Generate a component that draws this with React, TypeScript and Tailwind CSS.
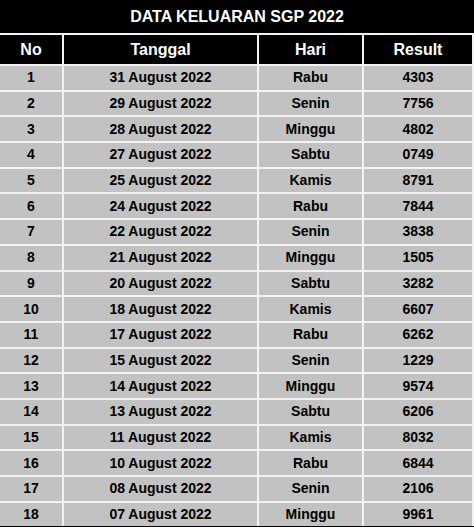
import React from 'react';

type Row = { no: number; tanggal: string; hari: string; result: string };

const rows: Row[] = [
  { no: 1, tanggal: '31 August 2022', hari: 'Rabu', result: '4303' },
  { no: 2, tanggal: '29 August 2022', hari: 'Senin', result: '7756' },
  { no: 3, tanggal: '28 August 2022', hari: 'Minggu', result: '4802' },
  { no: 4, tanggal: '27 August 2022', hari: 'Sabtu', result: '0749' },
  { no: 5, tanggal: '25 August 2022', hari: 'Kamis', result: '8791' },
  { no: 6, tanggal: '24 August 2022', hari: 'Rabu', result: '7844' },
  { no: 7, tanggal: '22 August 2022', hari: 'Senin', result: '3838' },
  { no: 8, tanggal: '21 August 2022', hari: 'Minggu', result: '1505' },
  { no: 9, tanggal: '20 August 2022', hari: 'Sabtu', result: '3282' },
  { no: 10, tanggal: '18 August 2022', hari: 'Kamis', result: '6607' },
  { no: 11, tanggal: '17 August 2022', hari: 'Rabu', result: '6262' },
  { no: 12, tanggal: '15 August 2022', hari: 'Senin', result: '1229' },
  { no: 13, tanggal: '14 August 2022', hari: 'Minggu', result: '9574' },
  { no: 14, tanggal: '13 August 2022', hari: 'Sabtu', result: '6206' },
  { no: 15, tanggal: '11 August 2022', hari: 'Kamis', result: '8032' },
  { no: 16, tanggal: '10 August 2022', hari: 'Rabu', result: '6844' },
  { no: 17, tanggal: '08 August 2022', hari: 'Senin', result: '2106' },
  { no: 18, tanggal: '07 August 2022', hari: 'Minggu', result: '9961' },
];

const headers = ['No', 'Tanggal', 'Hari', 'Result'];

const App: React.FC = () => {
  return (
    <div
      className="w-[474px] h-[527px] overflow-hidden bg-black"
      style={{ fontFamily: '"Liberation Sans", Arial, sans-serif' }}
    >
      {/* Title */}
      <div className="h-[33px] flex items-center justify-center text-white text-[16px] font-bold">
        DATA KELUARAN SGP 2022
      </div>

      {/* Table */}
      <div className="grid grid-cols-[62px_193px_103px_108px] gap-[2px] bg-[#f2f2f2] pt-[2px] pr-[2px]">
        {headers.map((h) => (
          <div
            key={h}
            className="h-[29px] bg-black flex items-center justify-center text-white text-[16px] font-bold"
          >
            {h}
          </div>
        ))}
        {rows.map((r) => (
          <React.Fragment key={r.no}>
            <div className="h-[23.7px] bg-[#c2c2c2] flex items-center justify-center text-black text-[14px] font-bold">
              {r.no}
            </div>
            <div className="h-[23.7px] bg-[#c2c2c2] flex items-center justify-center text-black text-[14px] font-bold">
              {r.tanggal}
            </div>
            <div className="h-[23.7px] bg-[#c2c2c2] flex items-center justify-center text-black text-[14px] font-bold">
              {r.hari}
            </div>
            <div className="h-[23.7px] bg-[#c2c2c2] flex items-center justify-center text-black text-[14px] font-bold">
              {r.result}
            </div>
          </React.Fragment>
        ))}
      </div>
    </div>
  );
};

export default App;
